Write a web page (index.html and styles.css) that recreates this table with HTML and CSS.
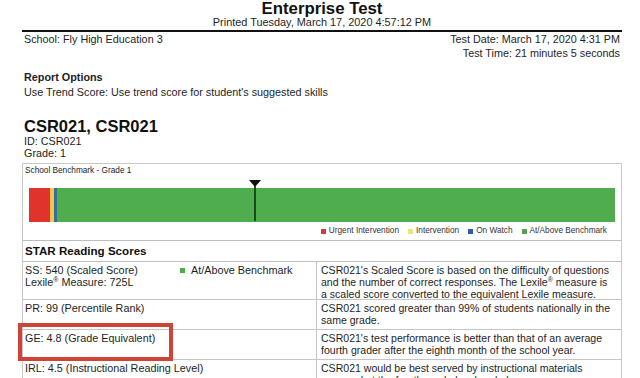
FILE: index.html
```html
<!DOCTYPE html>
<html lang="en">
<head>
<meta charset="utf-8">
<title>Enterprise Test</title>
<link rel="stylesheet" href="styles.css">
</head>
<body>
<div class="page">
  <header class="hdr">
    <h1 class="title">Enterprise Test</h1>
    <div class="printed">Printed Tuesday, March 17, 2020 4:57:12 PM</div>
  </header>
  <div class="meta">
    <div>School: Fly High Education 3</div>
    <div class="meta-right">
      <div>Test Date: March 17, 2020 4:31 PM</div>
      <div>Test Time: 21 minutes 5 seconds</div>
    </div>
  </div>
  <section class="options">
    <div class="opt-h">Report Options</div>
    <div>Use Trend Score: Use trend score for student's suggested skills</div>
  </section>
  <section class="student">
    <h2 class="name">CSR021, CSR021</h2>
    <div>ID: CSR021</div>
    <div>Grade: 1</div>
  </section>
  <div class="report">
    <div class="bench">
      <div class="bench-cap">School Benchmark - Grade 1</div>
      <div class="bar-wrap">
        <div class="bar">
          <span class="seg red" style="width:21px"></span>
          <span class="seg yellow" style="width:4px"></span>
          <span class="seg blue" style="width:3px"></span>
          <span class="seg green grow"></span>
        </div>
        <div class="marker" style="left:220px"></div>
      </div>
      <div class="legend">
        <span class="lg"><i class="sq red"></i>Urgent Intervention</span>
        <span class="lg"><i class="sq yellow"></i>Intervention</span>
        <span class="lg"><i class="sq blue"></i>On Watch</span>
        <span class="lg"><i class="sq green"></i>At/Above Benchmark</span>
      </div>
    </div>
    <div class="scores">
      <div class="scores-h">STAR Reading Scores</div>
      <div class="row r1">
        <div class="cl split">
          <div>SS: 540 (Scaled Score)<br>Lexile<sup>®</sup> Measure: 725L</div>
          <div class="status"><i class="sq green"></i>At/Above Benchmark</div>
        </div>
        <div class="cr">CSR021's Scaled Score is based on the difficulty of questions<br>and the number of correct responses. The Lexile<sup>®</sup> measure is<br>a scaled score converted to the equivalent Lexile measure.</div>
      </div>
      <div class="row r2">
        <div class="cl">PR: 99 (Percentile Rank)</div>
        <div class="cr">CSR021 scored greater than 99% of students nationally in the<br>same grade.</div>
      </div>
      <div class="row r2">
        <div class="cl">GE: 4.8 (Grade Equivalent)</div>
        <div class="cr">CSR021's test performance is better than that of an average<br>fourth grader after the eighth month of the school year.</div>
      </div>
      <div class="row r4">
        <div class="cl">IRL: 4.5 (Instructional Reading Level)</div>
        <div class="cr">CSR021 would be best served by instructional materials<br>prepared at the fourth grade level and above.</div>
      </div>
    </div>
    <div class="highlight"></div>
  </div>
</div>
</body>
</html>
```

FILE: styles.css
```css
* { box-sizing: border-box; }
html, body { margin: 0; background: #fff; }
body {
  font-family: "Liberation Sans", Arial, sans-serif;
  color: #1e1e1e;
  font-size: 10.8px;
}
.page { padding: 0 18px 0 22px; }

.hdr { border-bottom: 2px solid #111; padding-bottom: 2px; }
.title {
  margin: 0;
  font-size: 16.8px;
  line-height: 17px;
  font-weight: bold;
  text-align: center;
  color: #111;
}
.printed { font-size: 10.9px; line-height: 11px; text-align: center; }

.meta {
  display: flex;
  justify-content: space-between;
  line-height: 14px;
  padding: 0 2px;
}
.meta-right { text-align: right; }

.options { margin-top: 10px; line-height: 15px; padding-left: 2px; }
.opt-h { font-weight: bold; }

.student { margin-top: 18px; padding-left: 2px; line-height: 12px; }
.name {
  margin: 0;
  font-size: 16.5px;
  line-height: 17px;
  font-weight: bold;
  color: #111;
}

.report {
  position: relative;
  margin-top: 4px;
  border: 1px solid #c8c8c8;
}

.bench-cap {
  font-size: 8.25px;
  line-height: 10px;
  padding: 2px 0 0 2px;
  color: #222;
}
.bar-wrap { position: relative; margin: 12px 6px 0; }
.bar { display: flex; height: 34px; }
.seg { display: block; height: 100%; }
.grow { flex: 1; }
.red { background: #e0332b; }
.yellow { background: #f6c64a; }
.blue { background: #33709a; }
.green { background: #50ad4e; }

.marker {
  position: absolute;
  top: -8px;
  width: 12px;
  height: 0;
  border-left: 6px solid transparent;
  border-right: 6px solid transparent;
  border-top: 7px solid #111;
}
.marker::after {
  content: "";
  position: absolute;
  left: -1px;
  top: -1px;
  width: 2px;
  height: 35px;
  background: #1d4a1d;
}

.legend {
  display: flex;
  justify-content: flex-end;
  gap: 9px;
  font-size: 8.25px;
  line-height: 10px;
  margin-top: 4px;
  padding: 0 14px 4px 0;
  color: #333;
}
.lg { display: flex; align-items: center; }
.sq { display: inline-block; width: 5px; height: 5px; margin-right: 3px; }
.legend .red { background: #c8413b; }
.legend .yellow { background: #ece27a; }
.legend .blue { background: #2f5ea8; }
.legend .green { background: #5a9e5a; }

.scores-h {
  border-top: 1px solid #bdbdbd;
  border-bottom: 1px solid #bdbdbd;
  line-height: 20px;
  font-size: 11.6px;
  font-weight: bold;
  padding-left: 2px;
  color: #111;
}
.row {
  display: grid;
  grid-template-columns: 294px 1fr;
  border-bottom: 1px solid #c4c4c4;
  line-height: 11.75px;
}
.r1 { height: 38px; }
.r2 { height: 30px; }
.r4 { height: 40px; }
.cl { padding: 3px 2px 0; border-right: 1px solid #c4c4c4; }
.cr { padding: 3px 4px 0; font-size: 10.55px; white-space: nowrap; }
.split { display: grid; grid-template-columns: 155px 1fr; }
.status { display: flex; align-items: baseline; }
.status .sq { margin-right: 6px; position: relative; top: -1px; }
sup { font-size: 7px; line-height: 0; vertical-align: 4px; }

.highlight {
  position: absolute;
  left: -5px;
  top: 159px;
  width: 155px;
  height: 38px;
  border: 4px solid #cf4436;
}
```
